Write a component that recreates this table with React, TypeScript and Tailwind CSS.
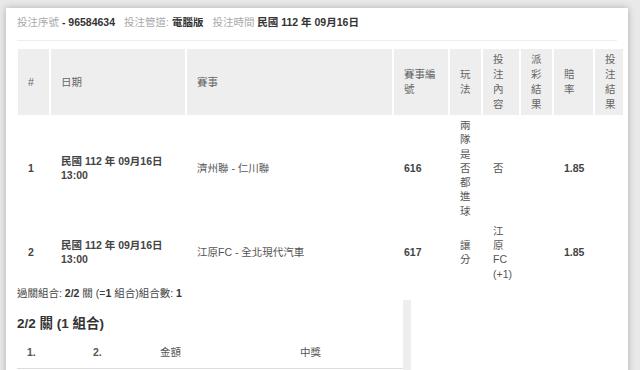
import React from "react";

const font = { fontFamily: '"Liberation Sans", Arial, "Noto Sans CJK TC", sans-serif' };

const cols = "grid grid-cols-[31px_134px_205px_54px_31px_36px_31px_39px_28px] gap-x-[2px]";

function H({ children }: { children: React.ReactNode }) {
  return (
    <div className="bg-[#eeeeee] flex items-center pl-[10px] pr-[9px] py-[3px] text-[#666] leading-[15px] break-all">
      <div>{children}</div>
    </div>
  );
}

function C({ children, bold }: { children: React.ReactNode; bold?: boolean }) {
  return (
    <div className={"flex items-center pl-[10px] pr-[9px] py-[3px] leading-[14.25px] " + (bold ? "text-[#444] font-bold" : "text-[#555]")}>
      <div>{children}</div>
    </div>
  );
}

export default function App() {
  return (
    <div className="w-[640px] h-[370px] overflow-hidden bg-[#e9e9e9] pl-[6px] pt-[8px]" style={font}>
      <div className="w-[622px] h-[400px] bg-white shadow-[0_0_7px_rgba(0,0,0,0.25)] px-[11px] pt-[7px] text-[10.5px]">
        <div className="leading-[15px] pb-[10px] border-b border-[#eeeeee] flex gap-[9px] whitespace-nowrap">
          <span>
            <span className="text-[#aaa]">投注序號</span>
            <span className="text-[#333] font-bold"> - 96584634</span>
          </span>
          <span>
            <span className="text-[#aaa]">投注管道: </span>
            <span className="text-[#333] font-bold">電腦版</span>
          </span>
          <span>
            <span className="text-[#aaa]">投注時間 </span>
            <span className="text-[#333] font-bold">民國 112 年 09月16日</span>
          </span>
        </div>

        <div className={cols + " mt-[8px] ml-[1px]"}>
          <H>#</H>
          <H>日期</H>
          <H>賽事</H>
          <H>賽事編號</H>
          <H>玩法</H>
          <H>投注內容</H>
          <H>派彩結果</H>
          <H>賠率</H>
          <H>投注結果</H>

          <C bold>1</C>
          <C bold>民國 112 年 09月16日 13:00</C>
          <C>濟州聯 - 仁川聯</C>
          <C bold>616</C>
          <C>兩隊是否都進球</C>
          <C>否</C>
          <C>{""}</C>
          <C bold>1.85</C>
          <C>{""}</C>

          <C bold>2</C>
          <C bold>民國 112 年 09月16日 13:00</C>
          <C>江原FC - 全北現代汽車</C>
          <C bold>617</C>
          <C>讓分</C>
          <C>江原FC (+1)</C>
          <C>{""}</C>
          <C bold>1.85</C>
          <C>{""}</C>
        </div>

        <div className="mt-[2px] leading-[15px] text-[#444] whitespace-nowrap">
          過關組合: <span className="font-bold text-[#333]">2/2</span> 關 (=<span className="font-bold text-[#333]">1</span> 組合)組合數: <span className="font-bold text-[#333]">1</span>
        </div>

        <div className="flex mt-[-1px]">
          <div className="w-[386px] pt-[14px]">
            <div className="text-[13.5px] leading-[19px] font-bold text-[#333]">2/2 關 (1 組合)</div>
            <div className="mt-[5px] grid grid-cols-[66px_67px_140px_113px] border-b border-[#dddddd] h-[31px] items-center text-[#555]">
              <div className="pl-[10px] font-bold">1.</div>
              <div className="pl-[10px] font-bold">2.</div>
              <div className="pl-[10px]">金額</div>
              <div className="pl-[10px]">中獎</div>
            </div>
          </div>
          <div className="w-[8px] bg-[#eeeeee] h-[80px]" />
        </div>
      </div>
    </div>
  );
}
